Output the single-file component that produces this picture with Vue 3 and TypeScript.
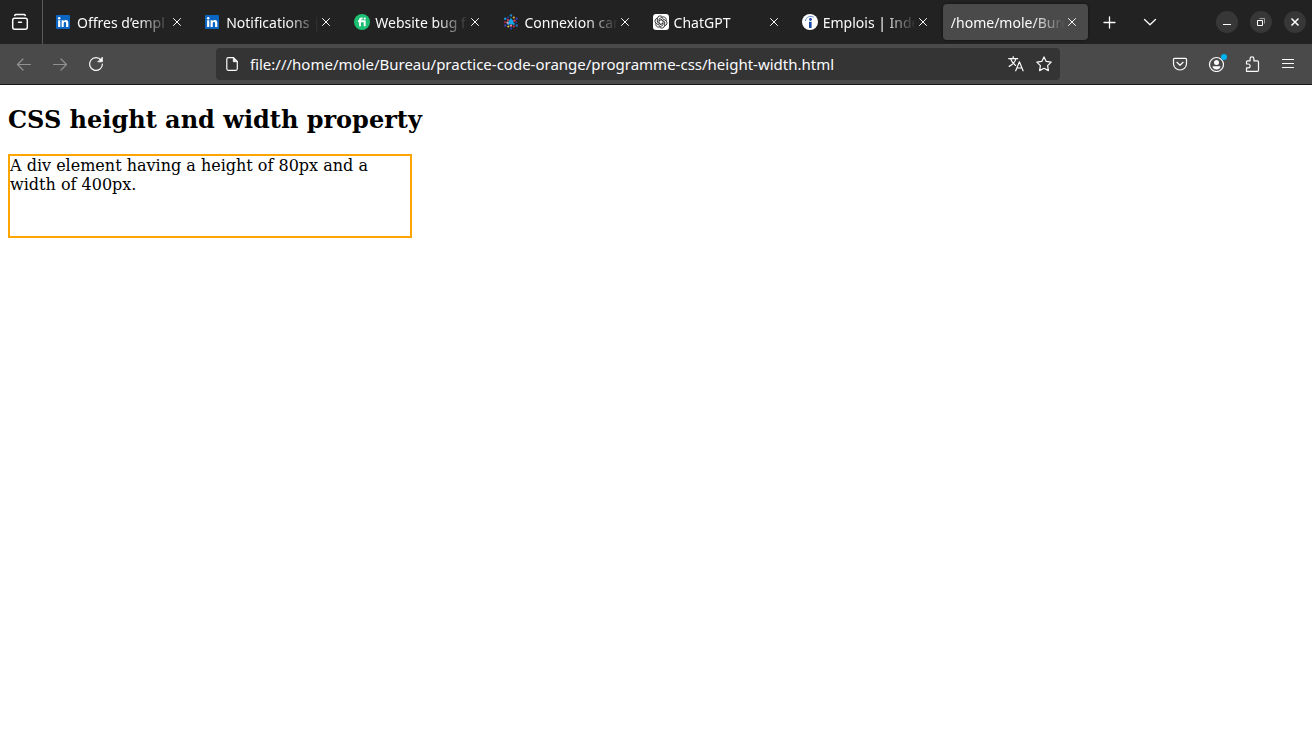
<script setup lang="ts">
import { ref } from 'vue'

interface Tab {
  title: string
  icon: 'linkedin' | 'fiverr' | 'dots' | 'chatgpt' | 'indeed' | ''
}

const tabs: Tab[] = [
  { title: 'Offres d’empl', icon: 'linkedin' },
  { title: 'Notifications |', icon: 'linkedin' },
  { title: 'Website bug f', icon: 'fiverr' },
  { title: 'Connexion car', icon: 'dots' },
  { title: 'ChatGPT', icon: 'chatgpt' },
  { title: 'Emplois | Inde', icon: 'indeed' },
  { title: '/home/mole/Bure', icon: '' },
]
const active = ref(6)
const url = ref('file:///home/mole/Bureau/practice-code-orange/programme-css/height-width.html')
const petals = [0, 60, 120, 180, 240, 300]
</script>

<template>
  <div class="browser">
    <header>
      <div class="tabbar">
        <button class="view" aria-label="Recent browsing">
          <svg width="18" height="18" viewBox="0 0 18 18" fill="none" stroke="#fbfbfe" stroke-width="1.5" stroke-linecap="round">
            <path d="M3.700 2.400Q4 1.500 5 1.500H13Q14 1.500 14.300 2.400" />
            <rect x="1.700" y="5.200" width="14.600" height="11" rx="2" />
            <path d="M7.500 9.200h3" />
          </svg>
        </button>
        <div class="tabs" role="tablist">
          <div v-for="(tab, i) in tabs" :key="i" class="tab" :class="{ active: i === active }">
            <button class="pick" role="tab" :aria-selected="i === active" @click="active = i">
              <svg v-if="tab.icon === 'linkedin'" class="fav" viewBox="0 0 16 16">
                <rect y="1" width="14" height="14" rx="1" fill="#0a66c2" />
                <circle cx="3.200" cy="4.300" r="1.250" fill="#fff" />
                <path d="M2.100 6.300h2.200V13H2.100zM5.600 6.300h2.100v.9c.5-.7 1.200-1.100 2.100-1.100 1.900 0 2.500 1.200 2.500 3V13h-2.200V9.500c0-.9-.3-1.500-1.100-1.500-.9 0-1.300.6-1.300 1.600V13H5.600z" fill="#fff" />
              </svg>
              <svg v-else-if="tab.icon === 'fiverr'" class="fav" viewBox="0 0 16 16">
                <circle cx="8" cy="8" r="8" fill="#1dbf73" />
                <path d="M4 7.300H10.700V12.200M6 12.200V6Q6 4.500 7.600 4.500H8.600" fill="none" stroke="#fff" stroke-width="1.900" />
                <circle cx="10.700" cy="4.600" r="1.100" fill="#fff" />
              </svg>
              <svg v-else-if="tab.icon === 'dots'" class="fav" viewBox="0 0 16 16">
                <path d="M8 8V4.500M8 8l3.500 2.500M8 8l-3.500 2.500" stroke="#12a5e8" stroke-width="1.800" />
                <circle cx="8" cy="8" r="2.600" fill="#12a5e8" />
                <circle cx="8" cy="1.400" r="1.200" fill="#1e86d0" />
                <circle cx="8" cy="14.500" r="1.200" fill="#283a9b" />
                <circle cx="2.200" cy="4.800" r="1.300" fill="#1b8ed6" />
                <circle cx="13.600" cy="4.600" r="1.300" fill="#353a9e" />
                <circle cx="2.200" cy="11.500" r="1.300" fill="#3a3fa5" />
                <circle cx="13.700" cy="11.500" r="1.300" fill="#1c70c0" />
                <circle cx="5.300" cy="3.500" r="1.100" fill="#283a9b" />
                <circle cx="10.800" cy="3.500" r="1.100" fill="#e0b63c" />
                <circle cx="5" cy="6" r="1.100" fill="#e63950" />
                <circle cx="11.400" cy="6.600" r="1.200" fill="#e63950" />
                <circle cx="4.500" cy="8.700" r="1.100" fill="#f5a0bb" />
                <circle cx="8" cy="11.600" r="1.200" fill="#f17aa4" />
                <circle cx="13.200" cy="8.300" r="1" fill="#2b3d9f" />
                <circle cx="5.300" cy="12.500" r="1" fill="#e4ca3b" />
                <circle cx="10.800" cy="12.500" r="1" fill="#d82f4d" />
                <circle cx="2" cy="8.300" r="1" fill="#b62b52" />
              </svg>
              <svg v-else-if="tab.icon === 'chatgpt'" class="fav" viewBox="0 0 16 16">
                <rect width="16" height="16" rx="3" fill="#fff" />
                <g fill="none" stroke="#222" stroke-width=".8" stroke-linejoin="round">
                  <path v-for="a in petals" :key="a" :transform="`rotate(${a} 8 8)`" d="M6 9.200V5L9 3.100Q11.200 2.200 12.700 3.900Q13.700 5.400 13 7" />
                </g>
              </svg>
              <svg v-else-if="tab.icon === 'indeed'" class="fav" viewBox="0 0 16 16">
                <circle cx="8" cy="8" r="8" fill="#fff" />
                <path d="M3.400 7C4.200 3 8 1 11.800 3.300" fill="none" stroke="#5f86c8" stroke-width="1" />
                <path d="M7 7.800h2.600V14H7z" fill="#1747a6" />
                <circle cx="8.500" cy="5.500" r="1.400" fill="#1747a6" />
              </svg>
              <span class="label">{{ tab.title }}</span>
            </button>
            <button class="close" :aria-label="`Close ${tab.title}`">
              <svg width="10" height="10" viewBox="0 0 10 10" stroke="#fbfbfe" stroke-linecap="round"><path d="M1.500 1.500l7 7M8.500 1.500l-7 7" /></svg>
            </button>
          </div>
        </div>
        <button class="tool" aria-label="New tab">
          <svg width="14" height="14" viewBox="0 0 14 14" stroke="#fbfbfe" stroke-width="1.300" stroke-linecap="round"><path d="M6.500 2v11M1 7.500h11" /></svg>
        </button>
        <button class="tool" aria-label="List all tabs">
          <svg width="14" height="14" viewBox="0 0 14 14" fill="none" stroke="#fbfbfe" stroke-width="1.300" stroke-linecap="round" stroke-linejoin="round"><path d="M1.500 4.500L7 9.800l5.500-5.300" /></svg>
        </button>
        <div class="window">
          <button aria-label="Minimize"><svg viewBox="0 0 22 22"><path d="M7 13.500h8" /></svg></button>
          <button aria-label="Restore"><svg viewBox="0 0 22 22"><path d="M7.500 9.500h5v5h-5z" /><path d="M9.500 7.500h5v5" opacity=".5" /></svg></button>
          <button aria-label="Close window"><svg viewBox="0 0 22 22"><path d="M7.500 7.500l7 7M14.500 7.500l-7 7" stroke-width="1.500" /></svg></button>
        </div>
      </div>

      <div class="toolbar">
        <button class="nav" aria-label="Back" disabled>
          <svg viewBox="0 0 16 16"><path d="M14.500 8.500H1.500M7 3L1.500 8.500 7 14" /></svg>
        </button>
        <button class="nav" aria-label="Forward" disabled>
          <svg viewBox="0 0 16 16"><path d="M1.500 8.500h13M9 3L14.500 8.500 9 14" /></svg>
        </button>
        <button class="nav" aria-label="Reload">
          <svg viewBox="0 0 16 16"><path d="M13.200 4.300A6.400 6.400 0 1 0 14.400 8" /><path d="M14.400 1.500v4.300h-4.300z" fill="#fbfbfe" stroke-width=".8" /></svg>
        </button>
        <div class="spring"></div>
        <div class="urlbar">
          <svg class="ico" viewBox="0 0 16 16"><path d="M4.300 1.700H9.500L13.300 5.500V12.800Q13.300 14.300 11.800 14.300H4.300Q2.800 14.300 2.800 12.800V3.200Q2.800 1.700 4.300 1.700z" /><path d="M9.300 2v3.700H13z" fill="#fbfbfe" stroke-width=".8" /></svg>
          <input v-model="url" type="text" aria-label="Address" spellcheck="false" />
          <button aria-label="Translate page">
            <svg class="ico" viewBox="0 0 16 16"><path d="M.7 2.700h9M5.200.7v2M7.800 2.900C7 6.400 4.200 8.800 1.200 10.400M2.700 3C3.800 6 5.700 8.300 7.600 9.400M7.700 14.800l3.700-9 3.700 9M8.900 12h5" /></svg>
          </button>
          <button aria-label="Bookmark page">
            <svg class="ico" viewBox="0 0 16 16"><path d="M8 .9l2.200 4.500 5 .7-3.600 3.500.8 5L8 12.300l-4.400 2.300.8-5L.8 6.100l5-.7z" /></svg>
          </button>
        </div>
        <div class="spring"></div>
        <button class="nav" aria-label="Pocket">
          <svg viewBox="0 0 16 16"><path d="M2.500 2.300h11Q14.500 2.300 14.500 3.300V7.700A6.500 6.300 0 0 1 1.500 7.700V3.300Q1.500 2.300 2.500 2.300zM4.900 6.300L8 9.300l3.100-3" /></svg>
        </button>
        <button class="nav" aria-label="Account">
          <svg viewBox="0 0 16 16"><circle cx="8.500" cy="8.500" r="7" /><circle cx="8.500" cy="6.500" r="2.500" fill="#fbfbfe" stroke="none" /><path d="M4.500 10.300h8c0 2-1.700 3.200-4 3.200s-4-1.200-4-3.200z" fill="#fbfbfe" stroke="none" /></svg>
          <i class="badge"></i>
        </button>
        <button class="nav" aria-label="Extensions">
          <svg viewBox="0 0 16 16"><path d="M2.500 15.300V11.800H4.200A1.900 1.900 0 0 0 4.200 8H2.500V5.900Q2.500 4.800 3.600 4.800H6.100V2.800A1.900 1.900 0 0 1 9.900 2.800V4.800H13.400Q14.500 4.800 14.500 5.900V14.200Q14.500 15.300 13.400 15.300z" /></svg>
        </button>
        <button class="nav" aria-label="Menu">
          <svg viewBox="0 0 16 16"><path d="M2.500 3.500h11M2.500 7.500h11M2.500 11.500h11" /></svg>
        </button>
      </div>
    </header>

    <main>
      <h2>CSS height and width property</h2>
      <div class="box">A div element having a height of 80px and a width of 400px.</div>
    </main>
  </div>
</template>

<style>
body {
  margin: 0;
  background: #fff;
}
</style>

<style scoped>
.browser {
  min-height: 100vh;
  background: #fff;
}
header {
  font-family: 'Noto Sans', 'Open Sans', sans-serif;
  font-size: 14px;
  color: #fbfbfe;
  border-bottom: 1px solid #1a171c;
}
button {
  display: flex;
  align-items: center;
  justify-content: center;
  flex: none;
  margin: 0;
  padding: 0;
  border: 0;
  background: none;
  color: inherit;
  font: inherit;
}
.tabbar {
  display: flex;
  align-items: center;
  height: 44px;
  padding-right: 6px;
  background: #222;
}
.view {
  width: 43px;
  height: 44px;
  padding-right: 3px;
  box-sizing: border-box;
  border-right: 1px solid #5a5a5a;
}
.tabs {
  display: flex;
  flex: 1;
  gap: 4px;
  min-width: 0;
  padding: 0 2px 0 5px;
}
.tab {
  display: flex;
  align-items: center;
  flex: 1 1 0;
  min-width: 0;
  height: 36px;
  padding: 0 9px 0 8px;
  box-sizing: border-box;
  border-radius: 4px;
}
.tab.active {
  background: #4a4a4a;
  box-shadow: 0 0 3px #0008;
}
.pick {
  flex: 1;
  justify-content: flex-start;
  gap: 5px;
  min-width: 0;
  height: 36px;
}
.fav {
  flex: none;
  width: 16px;
  height: 16px;
}
.label {
  flex: 1;
  overflow: hidden;
  padding-top: 2px;
  line-height: 20px;
  text-align: left;
  white-space: nowrap;
  mask-image: linear-gradient(to left, transparent, #000 32px);
}
.close {
  width: 14px;
  height: 24px;
}
.tool {
  width: 40px;
  height: 36px;
}
.window {
  display: flex;
  gap: 12px;
  padding-left: 46px;
}
.window button {
  width: 22px;
  height: 22px;
  border-radius: 50%;
  background: #373737;
}
.window svg {
  width: 22px;
  height: 22px;
  fill: none;
  stroke: #fff;
}
.toolbar {
  display: flex;
  align-items: center;
  height: 40px;
  padding: 0 6px;
  background: #4a4a4a;
}
.nav {
  position: relative;
  width: 36px;
  height: 32px;
}
.nav:disabled {
  opacity: 0.4;
}
.nav svg,
.ico {
  flex: none;
  width: 16px;
  height: 16px;
  fill: none;
  stroke: #fbfbfe;
  stroke-width: 1.2;
  stroke-linecap: round;
  stroke-linejoin: round;
}
.badge {
  position: absolute;
  top: 6px;
  right: 7px;
  width: 6px;
  height: 6px;
  border-radius: 50%;
  background: #00b3f4;
}
.spring {
  flex: 11;
}
.urlbar {
  display: flex;
  align-items: center;
  flex: 90;
  height: 32px;
  padding: 0 2px 0 8px;
  box-sizing: border-box;
  border-radius: 4px;
  background: #343434;
}
.urlbar input {
  flex: 1;
  min-width: 0;
  height: 32px;
  padding: 0 0 0 10px;
  border: 0;
  outline: 0;
  background: none;
  color: #fbfbfe;
  font: inherit;
  font-size: 15px;
}
.urlbar button {
  width: 28px;
  height: 28px;
}
main {
  padding: 20px 8px;
  color: #000;
  font-family: 'DejaVu Serif', serif;
  font-size: 16px;
  line-height: 19px;
}
h2 {
  margin: 0 0 20px;
  font-size: 24px;
  line-height: 29px;
}
.box {
  width: 400px;
  height: 80px;
  border: 2px solid orange;
}
</style>
